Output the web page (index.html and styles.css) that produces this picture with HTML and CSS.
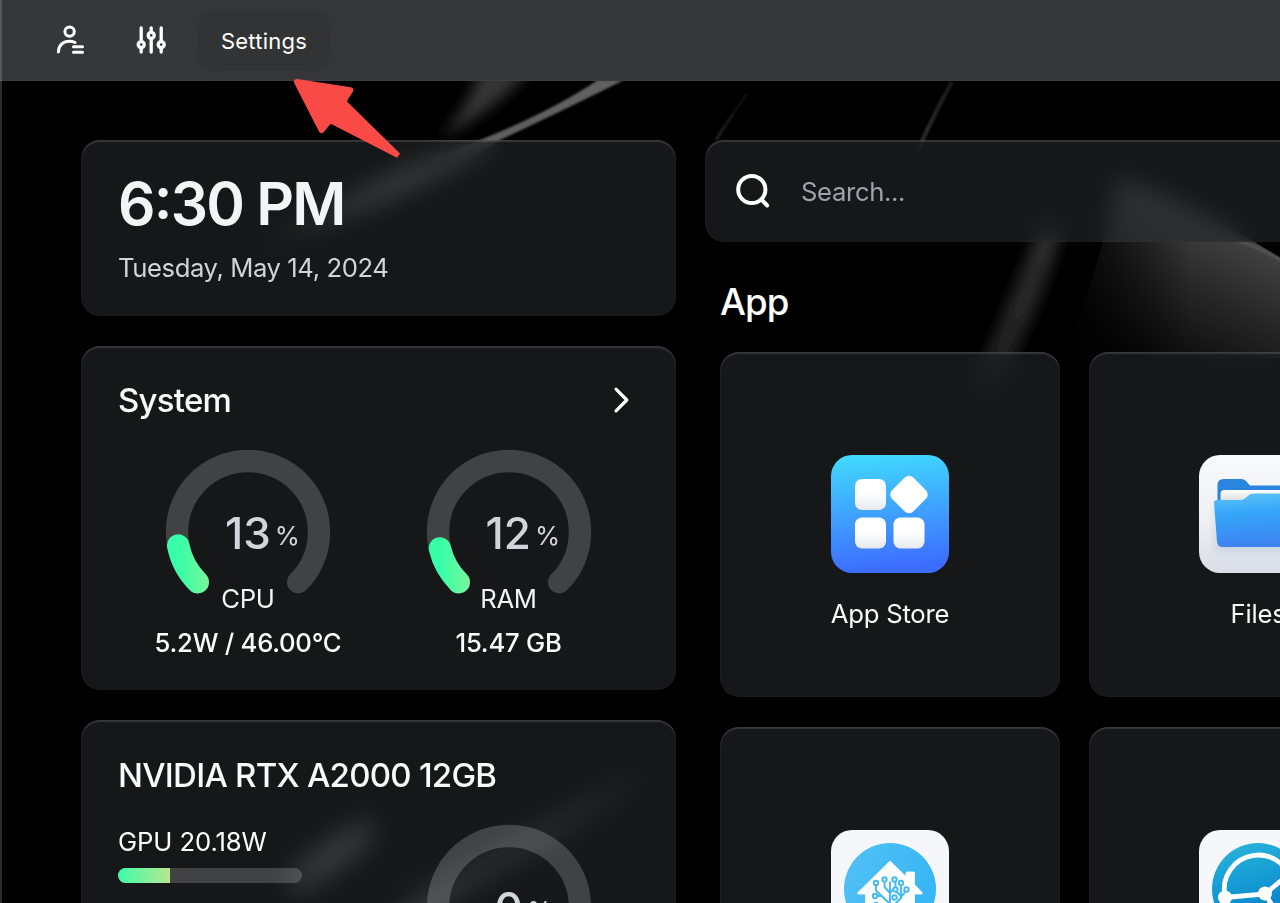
FILE: index.html
```
<!DOCTYPE html>
<html lang="en">
<head>
<meta charset="utf-8">
<title>Dashboard</title>
<link rel="stylesheet" href="styles.css">
</head>
<body>
<svg class="wallpaper" viewBox="0 0 1280 903" aria-hidden="true">
  <defs>
    <filter id="b1" x="-50%" y="-50%" width="200%" height="200%"><feGaussianBlur stdDeviation="1"/></filter>
    <filter id="b6" x="-50%" y="-50%" width="200%" height="200%"><feGaussianBlur stdDeviation="7"/></filter>
    <linearGradient id="fin" x1="1250" y1="225" x2="1180" y2="375" gradientUnits="userSpaceOnUse"><stop offset="0" stop-color="#484848"/><stop offset=".5" stop-color="#262626"/><stop offset="1" stop-color="#080808"/></linearGradient>
    <linearGradient id="finshade" x1="1060" y1="0" x2="1190" y2="0" gradientUnits="userSpaceOnUse"><stop offset="0" stop-color="#000" stop-opacity=".95"/><stop offset="1" stop-color="#000" stop-opacity="0"/></linearGradient>
    <linearGradient id="beam" x1="620" y1="80" x2="230" y2="250" gradientUnits="userSpaceOnUse"><stop offset="0" stop-color="#626262"/><stop offset=".65" stop-color="#5a5a5a"/><stop offset="1" stop-color="#000"/></linearGradient>
    <linearGradient id="ray" x1="950" y1="80" x2="915" y2="150" gradientUnits="userSpaceOnUse"><stop offset="0" stop-color="#1c1c1c"/><stop offset="1" stop-color="#303030"/></linearGradient>
    <linearGradient id="ray2" x1="755" y1="80" x2="710" y2="150" gradientUnits="userSpaceOnUse"><stop offset="0" stop-color="#000"/><stop offset="1" stop-color="#242424"/></linearGradient>
    <linearGradient id="shaft" x1="1050" y1="235" x2="980" y2="400" gradientUnits="userSpaceOnUse"><stop offset="0" stop-color="#2b2b2b"/><stop offset=".7" stop-color="#222"/><stop offset="1" stop-color="#050505"/></linearGradient>
  </defs>
  <path d="M482 66 L532 66 Q500 108 440 138 Q468 108 482 66Z" fill="#363636" filter="url(#b6)"/>
  <path d="M598 80 L624 80 Q560 112 500 140 Q420 195 240 256 Q320 208 400 170 Q460 148 480 140 Q550 112 598 80Z" fill="url(#beam)" filter="url(#b1)"/>
  <path d="M952 82 Q935 112 918 150" fill="none" stroke="url(#ray)" stroke-width="4" filter="url(#b1)"/>
  <path d="M757 80 Q738 105 716 140" fill="none" stroke="url(#ray2)" stroke-width="3.5" filter="url(#b1)"/>
  <path d="M1040 225 L1064 225 Q1040 315 985 410 L970 390 Q1010 300 1040 225Z" fill="url(#shaft)" filter="url(#b6)"/>
  <path d="M1118 177 Q1190 200 1290 264 L1290 358 L1060 358 Q1085 310 1103 242Z" fill="url(#fin)"/>
  <path d="M1103 242H1280V358H1060Q1085 310 1103 242Z" fill="url(#finshade)"/>
  <path d="M1225 236 Q1262 248 1284 262" fill="none" stroke="#565656" stroke-width="2.500" filter="url(#b1)"/>
  <ellipse cx="332" cy="856" rx="54" ry="12" fill="#707070" transform="rotate(-37 332 856)" filter="url(#b6)"/>
  <path d="M380 915 Q470 860 650 770 Q550 845 420 915Z" fill="#454545" filter="url(#b6)"/>
</svg>

<header class="topbar">
  <svg class="topbar-icon" width="30" height="30" viewBox="0 0 30 30" fill="none" stroke="#fff" stroke-width="3" stroke-linecap="round">
    <circle cx="14.600" cy="6.600" r="4.700"/>
    <path d="M3.400 27C3.600 20 8.500 16.200 14.500 16.200c2.400 0 4 .5 5.500 1.300M18.500 21.800h9M18.500 27.200h9"/>
  </svg>
  <svg class="topbar-icon" width="30" height="30" viewBox="0 0 30 30" fill="none" stroke="#fff" stroke-width="3.300" stroke-linecap="round">
    <path d="M5.200 2.800v13.300M5.200 23v4M15.200 2.800v4.200M15.200 13.400V27M25.200 2.800v13.300M25.200 23v4"/>
    <circle cx="5.200" cy="19.600" r="3"/><circle cx="15.200" cy="10.400" r="3"/><circle cx="25.200" cy="19.600" r="3"/>
  </svg>
  <div class="tip">Settings</div>
</header>

<main class="board">
  <section class="side">
    <article class="card clock">
      <div class="time">6:30 PM</div>
      <div class="date">Tuesday, May 14, 2024</div>
    </article>
    <article class="card system">
      <div class="card-head">
        <h2 class="system-title">System</h2>
        <svg width="20" height="30" viewBox="0 0 20 30" fill="none" stroke="#fff" stroke-width="3.200" stroke-linecap="round" stroke-linejoin="round"><path d="M5 4.200 15.800 15 5 25.800"/></svg>
      </div>
      <div class="gauges">
        <div class="gauge">
          <div class="dial">
            <svg width="166" height="146" viewBox="0 0 166 146" fill="none" stroke-width="22.400" stroke-linecap="round">
              <defs><linearGradient id="g" x1="10" y1="0" x2="46" y2="0" gradientUnits="userSpaceOnUse"><stop offset=".1" stop-color="#36ffa8"/><stop offset="1" stop-color="#7df59a"/></linearGradient></defs>
              <path class="track" d="M32.800 133.200A71 71 0 1 1 133.200 133.200"/>
              <path d="M32.800 133.200A71 71 0 0 1 13.200 96.500" stroke="url(#g)"/>
            </svg>
            <div class="value">13<span class="unit">%</span></div>
          </div>
          <div class="name">CPU</div>
          <div class="detail">5.2W / 46.00°C</div>
        </div>
        <div class="gauge">
          <div class="dial">
            <svg width="166" height="146" viewBox="0 0 166 146" fill="none" stroke-width="22.400" stroke-linecap="round">
              <path class="track" d="M32.800 133.200A71 71 0 1 1 133.200 133.200"/>
              <path d="M32.800 133.200A71 71 0 0 1 13.900 99.500" stroke="url(#g)"/>
            </svg>
            <div class="value">12<span class="unit">%</span></div>
          </div>
          <div class="name">RAM</div>
          <div class="detail">15.47 GB</div>
        </div>
      </div>
    </article>
    <article class="card gpu">
      <h2 class="gpu-title">NVIDIA RTX A2000 12GB</h2>
      <div class="gauges">
        <div class="meter">
          <div class="meter-label">GPU 20.18W</div>
          <div class="bar"><div class="bar-fill" style="width:28%"></div></div>
        </div>
        <div class="gauge">
          <div class="dial">
            <svg width="166" height="146" viewBox="0 0 166 146" fill="none" stroke-width="22.400" stroke-linecap="round">
              <path class="track" d="M32.800 133.200A71 71 0 1 1 133.200 133.200"/>
            </svg>
            <div class="value zero">0<span class="unit">%</span></div>
          </div>
        </div>
      </div>
    </article>
  </section>

  <section class="content">
    <div class="card search">
      <svg width="40" height="40" viewBox="0 0 40 40" fill="none" stroke="#fff" stroke-width="4" stroke-linecap="round"><circle cx="18.800" cy="18.500" r="13.600"/><path d="M28.800 28.800 34.200 34.500"/></svg>
      <span class="placeholder">Search...</span>
    </div>
    <h2 class="apps-title">App</h2>
    <div class="apps">
      <article class="card app">
        <svg width="118" height="118" viewBox="0 0 118 118">
          <defs>
            <linearGradient id="store" x1="0" y1="0" x2=".1" y2="1"><stop offset="0" stop-color="#41dcff"/><stop offset="1" stop-color="#3d6dff"/></linearGradient>
            <linearGradient id="tile" x1="0" y1="0" x2="0" y2="1"><stop offset=".45" stop-color="#fff"/><stop offset="1" stop-color="#e6e9ee"/></linearGradient>
          </defs>
          <rect width="118" height="118" rx="21" fill="url(#store)"/>
          <g fill="url(#tile)">
            <rect x="24" y="24" width="31" height="31" rx="7"/>
            <rect x="24" y="62.500" width="31" height="31" rx="7"/>
            <rect x="62.500" y="62.500" width="31" height="31" rx="7"/>
          </g>
          <rect x="63" y="24.500" width="30" height="30" rx="6" fill="#fff" transform="rotate(45 78 39.500)"/>
        </svg>
        <div class="app-name">App Store</div>
      </article>
      <article class="card app app-right">
        <svg width="118" height="118" viewBox="0 0 118 118">
          <defs>
            <linearGradient id="plate" x1="0" y1="0" x2="0" y2="1"><stop offset="0" stop-color="#f9fafd"/><stop offset=".55" stop-color="#eef0f5"/><stop offset="1" stop-color="#d9dde6"/></linearGradient>
            <linearGradient id="front" x1="0" y1="0" x2=".1" y2="1"><stop offset="0" stop-color="#5bc5f7"/><stop offset=".4" stop-color="#35a5f8"/><stop offset="1" stop-color="#3d84f2"/></linearGradient>
            <linearGradient id="paper" x1="0" y1="0" x2="0" y2="1"><stop offset="0" stop-color="#fff"/><stop offset=".5" stop-color="#d5d8d8"/></linearGradient>
            <filter id="soft" x="-20%" y="-20%" width="140%" height="150%"><feGaussianBlur stdDeviation="4"/></filter>
          </defs>
          <rect width="118" height="118" rx="21" fill="url(#plate)"/>
          <rect x="16" y="48" width="86" height="49" rx="6" fill="#8fa5cc" opacity=".3" filter="url(#soft)"/>
          <path d="M18.500 50V30q0-6 6-6H42q3 0 5 2l4 4.500H94q6 0 6 6V60H18.500Z" fill="#2985df"/>
          <path d="M21.500 60V39q0-4 4-4H92q4 0 4 4V60Z" fill="url(#paper)"/>
          <path d="M15 47.500q0-2.500 3-2.500H42q2.500 0 4.500-2l3-2.500q2-2 5-2H99q4 0 4 4L100 87q-.5 5-5.500 5H24q-5.500 0-6-5.500Z" fill="url(#front)"/>
        </svg>
        <div class="app-name">Files</div>
      </article>
      <article class="card app">
        <svg width="118" height="118" viewBox="0 0 118 118">
          <defs><linearGradient id="ha" x1="0" y1="0" x2="1" y2=".4"><stop offset="0" stop-color="#52c1f5"/><stop offset="1" stop-color="#38b6f5"/></linearGradient></defs>
          <rect width="118" height="118" rx="21" fill="#f6f7fb"/>
          <circle cx="59" cy="59" r="46" fill="url(#ha)"/>
          <path d="M59 31 75 46.500V43q0-1 1-1h6.500q1 0 1 1V54.500L91 62.500q1 1.500-1 1.500H83.500V91H34.500V64H28q-2 0-1-1.500Z" fill="#fff" stroke="#fff" stroke-width=".8" stroke-linejoin="round"/>
          <g fill="none" stroke="#41b9f5" stroke-width="1.900">
            <path d="M59 51.500V91M53.500 52.500V57L59 63M64.500 52V57L59 63M45 55v5.500L59 74M46 66h5M70 55v13L59 79M73.500 60v3L70 67M65 61.500 70 66M45 75h5l9 10"/>
            <g fill="#fff"><circle cx="45" cy="53" r="2.200"/><circle cx="53.500" cy="49.500" r="2.200"/><circle cx="63.500" cy="49.500" r="2.200"/><circle cx="70" cy="53" r="2.200"/><circle cx="75.500" cy="59.500" r="2.200"/><circle cx="64.500" cy="59.500" r="2.200"/><circle cx="44" cy="66" r="2.200"/><circle cx="63.500" cy="67.500" r="2.200"/><circle cx="45" cy="75" r="2.200"/></g>
          </g>
        </svg>
      </article>
      <article class="card app app-right">
        <svg width="118" height="118" viewBox="0 0 118 118">
          <defs><linearGradient id="net" x1="0" y1="0" x2=".3" y2="1"><stop offset="0" stop-color="#2cb6dc"/><stop offset=".5" stop-color="#159bd3"/><stop offset="1" stop-color="#0878c4"/></linearGradient></defs>
          <rect width="118" height="118" rx="21" fill="#f6f7fb"/>
          <circle cx="59" cy="59" r="46" fill="url(#net)"/>
          <path d="M26 66A34 34 0 1 1 58 93M26 67.500 66 64 90 44M66 64 82 89" fill="none" stroke="#fff" stroke-width="4.800"/>
          <circle cx="26" cy="67.500" r="7" fill="#fff"/><circle cx="66" cy="63.500" r="7" fill="#fff"/>
        </svg>
      </article>
    </div>
  </section>
</main>

<svg class="pointer" width="112" height="86" viewBox="0 0 112 86" aria-hidden="true">
  <path d="M6 7 59.500 15.500 56 26.500 109 78.500 106 82.800 39.700 48.700 30 56Z" fill="#f94a45"/>
  <path d="M6 7 59.300 15.200 52 26 38 46 30.500 55Z" fill="#f94a45" stroke="#f94a45" stroke-width="6" stroke-linejoin="round"/>
</svg>
</body>
</html>
```
FILE: styles.css
```
* { box-sizing: border-box; }
body {
  margin: 0;
  width: 1280px;
  height: 903px;
  overflow: hidden;
  background: #000;
  color: #fff;
  font-family: Inter, "Liberation Sans", sans-serif;
  font-size: 25.67px;
  position: relative;
}
body::after {
  content: "";
  position: absolute;
  left: 0;
  top: 0;
  width: 2px;
  height: 903px;
  background: rgba(255, 255, 255, .17);
}
h2 { margin: 0; font-weight: 500; }
svg { display: block; flex: none; }
.wallpaper { position: absolute; left: 0; top: 0; width: 1280px; height: 903px; }
.topbar {
  position: relative;
  height: 81px;
  background: #36373b;
  border-bottom: 1px solid #3d3e41;
  display: flex;
  align-items: flex-start;
  padding: 11px 0 0 55px;
}
.topbar-icon { margin: 14px 51px 0 0; }
.topbar-icon + .topbar-icon { margin-right: 31px; }
.tip {
  width: 132px;
  height: 59px;
  margin-left: 1px;
  border-radius: 14px;
  background: #323335;
  box-shadow: 0 0 12px rgba(45, 45, 45, .22);
  text-align: center;
  font-size: 22px;
  line-height: 60px;
  letter-spacing: .25px;
}
.board {
  display: flex;
  gap: 29px;
  padding: 59px 0 0 81px;
}
.side { width: 595px; flex: none; display: flex; flex-direction: column; gap: 30px; }
.card {
  background: rgba(37, 38, 41, .6);
  border-radius: 19px;
  -webkit-backdrop-filter: blur(12px);
  backdrop-filter: blur(12px);
  box-shadow: inset 0 2px 1px rgba(255, 255, 255, .13), inset 0 0 0 1px rgba(255, 255, 255, .025);
}
.clock { height: 176px; padding: 34px 37px 0; }
.time { font-size: 58.67px; font-weight: 600; line-height: 60px; letter-spacing: -1.75px; font-feature-settings: "case"; color: #f3f4f6; white-space: nowrap; }
.date { margin-top: 14px; line-height: 40px; letter-spacing: -.42px; color: #d1d5db; white-space: nowrap; }
.system { height: 344px; padding: 29px 37px 0; }
.card-head { height: 50px; display: flex; align-items: center; justify-content: space-between; padding-right: 8px; }
.system-title, .gpu-title { font-size: 33px; line-height: 50px; letter-spacing: -.75px; color: #f9fafb; white-space: nowrap; }
.gauges { display: grid; grid-template-columns: 260px 261px; }
.system .gauges { margin-top: 24px; }
.gauge { display: flex; flex-direction: column; align-items: center; }
.dial { position: relative; }
.track { stroke: rgba(255, 255, 255, .19); }
.value {
  position: absolute;
  left: 60px;
  top: 58px;
  line-height: 52px;
  font-size: 44px;
  font-weight: 450;
  color: #d1d5db;
  white-space: nowrap;
}
.zero { left: 69px; }
.unit { position: relative; top: -4px; margin-left: 4px; font-size: 25.67px; font-weight: 400; }
.name { margin-top: -16px; line-height: 40px; letter-spacing: -.3px; color: #f3f4f6; }
.detail { margin-top: 4px; line-height: 40px; font-weight: 450; letter-spacing: -.25px; color: #fff; white-space: nowrap; }
.gpu { height: 344px; padding: 30px 37px 0; }
.gpu .gauges { margin-top: 24px; }
.meter-label { margin-top: -2px; line-height: 40px; letter-spacing: -.1px; white-space: nowrap; }
.bar { margin-top: 6px; width: 184px; height: 15px; border-radius: 8px; overflow: hidden; background: rgba(255, 255, 255, .19); }
.bar-fill { height: 15px; background: linear-gradient(90deg, #3dfcaa, #b9e590); }
.content { width: 760px; flex: none; }
.search { height: 102px; display: flex; align-items: center; gap: 28px; padding-left: 28px; }
.placeholder { color: #9ca3af; letter-spacing: -.35px; }
.apps-title { margin: 36px 0 0 15px; font-size: 36.67px; line-height: 48px; letter-spacing: -1px; }
.apps { margin: 26px 0 0 15px; display: grid; grid-template-columns: 340px 340px; gap: 30px 29px; }
.app { height: 345px; padding-top: 103px; display: flex; flex-direction: column; align-items: center; }
.app-right { padding-right: 2px; }
.app-name { margin-top: 21px; line-height: 40px; letter-spacing: -.22px; color: #f9fafb; white-space: nowrap; }
.pointer { position: absolute; left: 291px; top: 75px; }
```
